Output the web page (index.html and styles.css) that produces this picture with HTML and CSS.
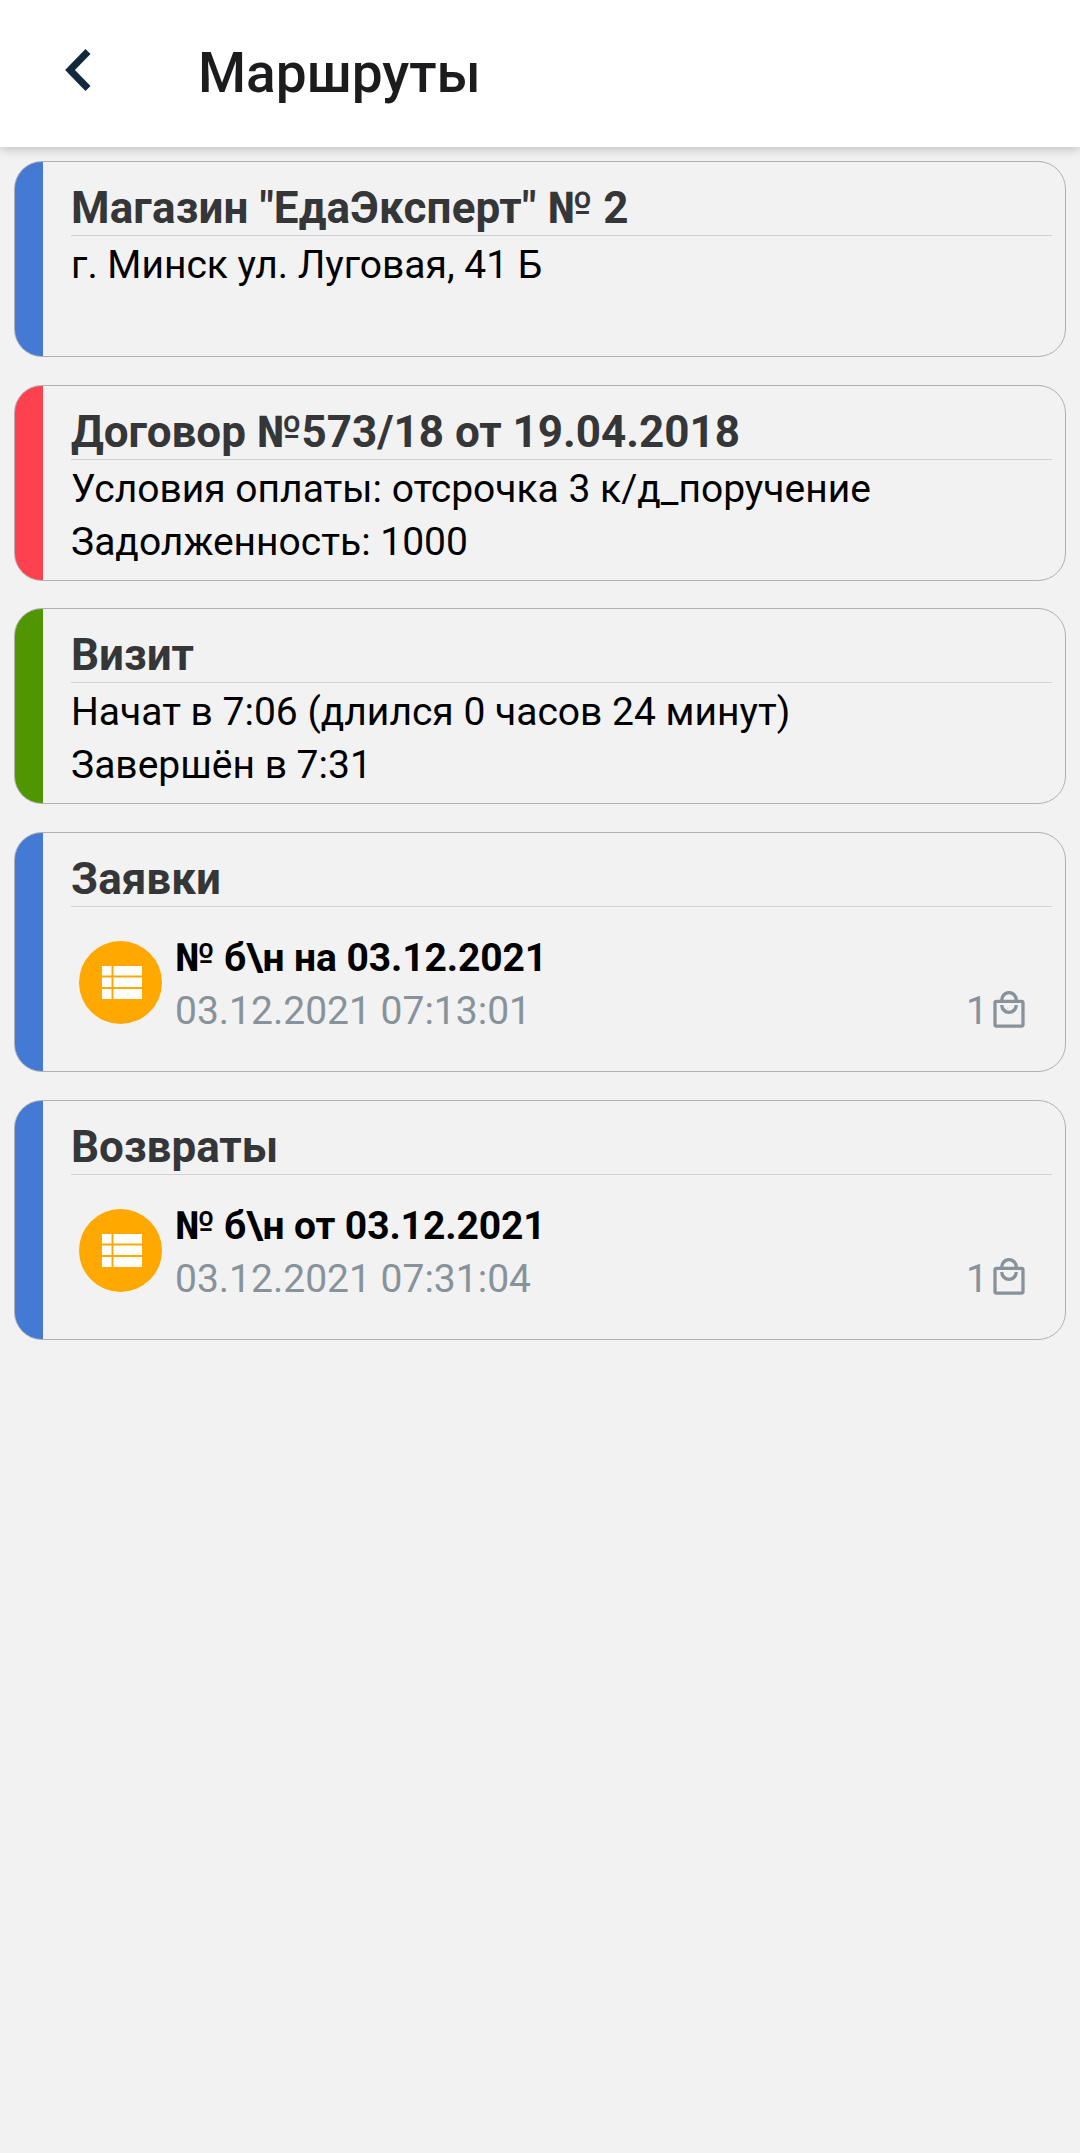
FILE: index.html
```html
<!DOCTYPE html>
<html lang="ru">
<head>
<meta charset="UTF-8">
<title>Маршруты</title>
<link rel="stylesheet" href="styles.css">
</head>
<body>
<header class="topbar">
  <svg class="back" viewBox="0 0 26 43" width="26" height="43"><path d="M23 2.500 5 21l18 18.500" fill="none" stroke="#12283c" stroke-width="7"/></svg>
  <h1 class="topbar-title">Маршруты</h1>
</header>
<main class="list">
  <section class="card card-blue">
    <h2 class="card-title card-title-wide">Магазин "ЕдаЭксперт" № 2</h2>
    <div class="card-body">
      <p>г. Минск ул. Луговая, 41 Б</p>
    </div>
  </section>
  <section class="card card-red">
    <h2 class="card-title">Договор №573/18 от 19.04.2018</h2>
    <div class="card-body">
      <p>Условия оплаты: отсрочка 3 к/д_поручение</p>
      <p>Задолженность: 1000</p>
    </div>
  </section>
  <section class="card card-green">
    <h2 class="card-title">Визит</h2>
    <div class="card-body">
      <p>Начат в 7:06 (длился 0 часов 24 минут)</p>
      <p>Завершён в 7:31</p>
    </div>
  </section>
  <section class="card card-blue card-tall">
    <h2 class="card-title">Заявки</h2>
    <div class="doc">
      <div class="doc-icon"><svg viewBox="0 0 40 33" width="40" height="33" fill="#fff"><path d="M0 0h9.500v9.500H0zM11.500 0H40v9.500H11.500zM0 11.500h9.500v9.500H0zM11.500 11.500H40v9.500H11.500zM0 23h9.500v10H0zM11.500 23H40v10H11.500z"/></svg></div>
      <div class="doc-text">
        <p class="doc-name">№ б\н на 03.12.2021</p>
        <p class="doc-date">03.12.2021 07:13:01</p>
      </div>
      <div class="doc-count">
        <span>1</span>
        <svg viewBox="0 0 32 37" width="32" height="37" fill="none" stroke="#87929b" stroke-width="3.300"><rect x="2" y="10.400" width="28" height="24.700" rx="1.500"/><path d="M8.800 10V8.800a7.200 7.200 0 0 1 14.400 0V10M8.800 14v.2a7.200 7.200 0 0 0 14.400 0V14"/></svg>
      </div>
    </div>
  </section>
  <section class="card card-blue card-tall">
    <h2 class="card-title">Возвраты</h2>
    <div class="doc">
      <div class="doc-icon"><svg viewBox="0 0 40 33" width="40" height="33" fill="#fff"><path d="M0 0h9.500v9.500H0zM11.500 0H40v9.500H11.500zM0 11.500h9.500v9.500H0zM11.500 11.500H40v9.500H11.500zM0 23h9.500v10H0zM11.500 23H40v10H11.500z"/></svg></div>
      <div class="doc-text">
        <p class="doc-name">№ б\н от 03.12.2021</p>
        <p class="doc-date">03.12.2021 07:31:04</p>
      </div>
      <div class="doc-count">
        <span>1</span>
        <svg viewBox="0 0 32 37" width="32" height="37" fill="none" stroke="#87929b" stroke-width="3.300"><rect x="2" y="10.400" width="28" height="24.700" rx="1.500"/><path d="M8.800 10V8.800a7.200 7.200 0 0 1 14.400 0V10M8.800 14v.2a7.200 7.200 0 0 0 14.400 0V14"/></svg>
      </div>
    </div>
  </section>
</main>
</body>
</html>
```
FILE: styles.css
```css
* { box-sizing: border-box; }

body {
  margin: 0;
  min-height: 2153px;
  background: #f2f2f2;
  color: #000;
  font-family: Roboto, "Liberation Sans", sans-serif;
}

h1, h2, p { margin: 0; }

svg { display: block; }

.topbar {
  display: flex;
  align-items: flex-start;
  height: 147px;
  padding: 39px 0 0 65px;
  background: #fff;
  box-shadow: 0 2px 10px rgba(0, 0, 0, .22);
}

.back { margin-top: 10px; }

.topbar-title {
  margin-top: 1px;
  margin-left: 107px;
  color: #1c1c1e;
  font-size: 55px;
  font-weight: 500;
  line-height: 67px;
}

.list {
  display: flex;
  flex-direction: column;
  gap: 27.700px;
  padding: 14px 14px 0;
}

.card {
  height: 196px;
  padding: 19px 13px 0 56px;
  border: 1px solid #b0b0b0;
  border-radius: 28px;
  background-repeat: no-repeat;
  background-size: 28px 100%;
}

.card-tall { height: 240px; }

.card-blue { background-image: linear-gradient(#4479d4, #4479d4); }
.card-red { background-image: linear-gradient(#fd414f, #fd414f); }
.card-green { background-image: linear-gradient(#4f9600, #4f9600); }

.card-title {
  height: 55px;
  border-bottom: 1px solid #d2d2d2;
  color: #353638;
  font-size: 44px;
  font-weight: 700;
  line-height: 54px;
  white-space: nowrap;
}

.card-title-wide { letter-spacing: .15px; }

.card-body {
  padding-top: 3px;
  font-size: 39px;
  line-height: 53px;
  white-space: nowrap;
}

.doc {
  display: flex;
  align-items: flex-start;
  padding: 25px 27px 0 8px;
  font-size: 39px;
  line-height: 53px;
}

.doc-icon {
  display: flex;
  align-items: center;
  justify-content: center;
  width: 83px;
  height: 83px;
  margin-top: 9px;
  padding-left: 2px;
  border-radius: 50%;
  background: #ffa800;
}

.doc-text {
  flex: 1;
  margin-left: 13px;
}

.doc-name {
  font-weight: 700;
  letter-spacing: -.1px;
}

.doc-date,
.doc-count { color: #87929b; }

.doc-count {
  display: flex;
  align-items: center;
  gap: 5px;
  margin-top: 53px;
}

.doc-count svg { margin-bottom: 5px; }
```
